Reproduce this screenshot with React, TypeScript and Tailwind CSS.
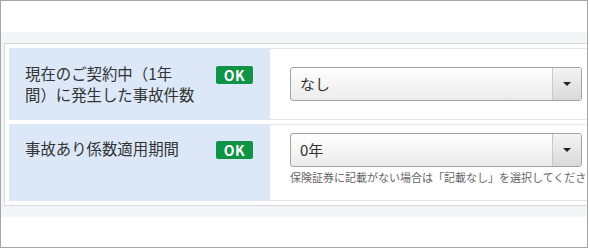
const jp = { fontFamily: '"Noto Sans CJK JP", "Noto Sans", sans-serif' };

const OkBadge = () => (
  <span className="mt-[3px] flex h-[18px] w-[37px] shrink-0 items-center justify-center rounded-[2px] bg-[#0e9444] text-[14px] font-bold leading-none tracking-[0.5px] text-white">
    OK
  </span>
);

const SelectBox = ({ value }: { value: string }) => (
  <div className="flex h-[34px] w-[292px] items-stretch overflow-hidden rounded-[3px] border border-[#a3a3a3] bg-gradient-to-b from-white to-[#ebebeb]">
    <span className="flex flex-1 items-center pl-[9px] text-[15px] text-[#333]">{value}</span>
    <span className="flex w-[29px] items-center justify-center border-l border-[#c8c8c8] bg-gradient-to-b from-[#f4f4f4] to-[#d9d9d9]">
      <span className="h-0 w-0 border-x-[4px] border-t-[4px] border-x-transparent border-t-[#222]" />
    </span>
  </div>
);

export default function App() {
  return (
    <div className="h-[248px] w-[588px] overflow-hidden border border-[#a6a6a6] bg-white" style={jp}>
      <div className="mt-[31px] bg-[#f4f5f7] pb-[11px] pl-[3px] pt-[11px]">
        <div className="flex w-[720px] flex-col gap-[4px] border border-[#d9d8de] bg-white p-[4px]">
          <div className="flex h-[72px] border border-[#e4e4e8]">
            <div className="-my-px -ml-px flex w-[261px] items-start justify-between bg-[#dce8f8] pl-[16px] pr-[17px] pt-[15px]">
              <p className="w-[176px] text-[15.4px] leading-[21px] text-[#333]">
                現在のご契約中（1年
                <br />
                間）に発生した事故件数
              </p>
              <OkBadge />
            </div>
            <div className="flex flex-1 items-center pl-[20px]">
              <SelectBox value="なし" />
            </div>
          </div>
          <div className="flex h-[77px] border border-[#e4e4e8]">
            <div className="-my-px -ml-px flex w-[261px] items-start justify-between bg-[#dce8f8] pl-[16px] pr-[17px] pt-[14px]">
              <p className="w-[176px] text-[15.4px] leading-[21px] text-[#333]">事故あり係数適用期間</p>
              <OkBadge />
            </div>
            <div className="flex flex-1 flex-col pl-[20px] pt-[8px]">
              <SelectBox value="0年" />
              <p className="mt-[2px] whitespace-nowrap text-[11px] leading-[16px] text-[#666]">
                保険証券に記載がない場合は「記載なし」を選択してください。
              </p>
            </div>
          </div>
        </div>
      </div>
    </div>
  );
}
